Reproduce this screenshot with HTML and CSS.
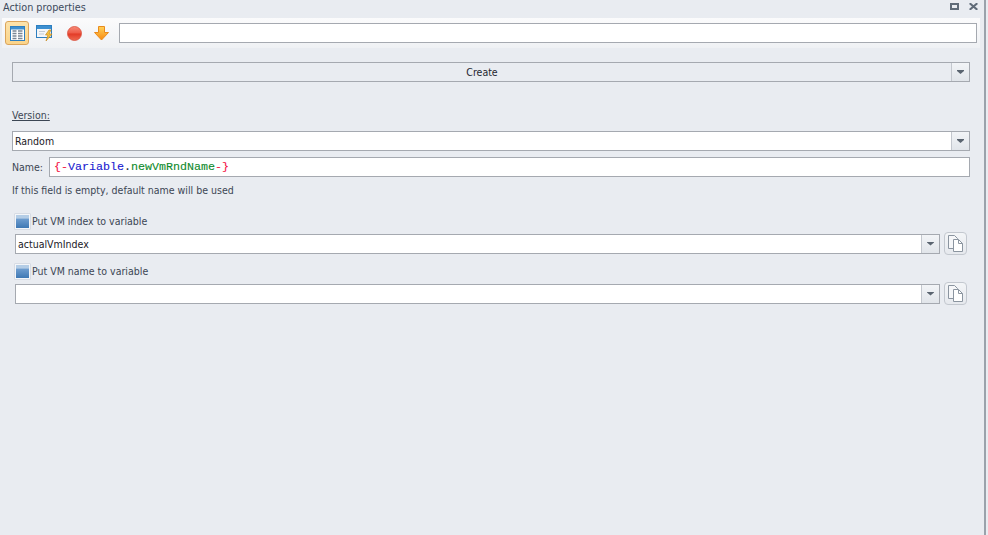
FILE: index.html
```html
<!DOCTYPE html>
<html lang="en">
<head>
<meta charset="utf-8">
<title>Action properties</title>
<link rel="stylesheet" href="styles.css">
</head>
<body>
<div class="panel">
  <header class="titlebar">
    <span class="title">Action properties</span>
    <span class="winbtns">
      <svg class="winicon" width="9" height="7" viewBox="0 0 9 7"><path d="M1 1h7v5H1z" fill="none" stroke="#5f6b78" stroke-width="2"/></svg>
      <svg class="winicon" width="9" height="7" viewBox="0 0 9 7"><path d="M.7 .2l7.600 6.600M8.300 .2L.7 6.800" fill="none" stroke="#5f6b78" stroke-width="2"/></svg>
    </span>
  </header>
  <div class="toolbar">
    <button class="tool selected" aria-label="Table">
      <svg width="15" height="15" viewBox="0 0 15 15"><rect x=".5" y=".5" width="14" height="14" fill="#fff" stroke="#2d7fc0"/><rect x="1" y="1" width="13" height="2.500" fill="#3d8fd0"/><path d="M2.500 5h4M2.500 7.500h4M2.500 10h4M2.500 12.500h4M8 5h4.500M8 7.500h4.500M8 10h4.500M8 12.500h4.500" stroke="#7b8794" stroke-width="1.300"/></svg>
    </button>
    <button class="tool" aria-label="Window event">
      <svg width="17" height="17" viewBox="0 0 17 17"><rect x=".5" y=".5" width="15" height="12" fill="#f4f6f8" stroke="#2d7fc0"/><rect x="1" y="1" width="14" height="3" fill="#3d8fd0"/><path d="M3 6.500h6M3 9h5" stroke="#c3cad2"/><path d="M13 5l-3.500 5h2.500l-2 6 6-7h-3l2-4z" fill="#f7c33f" stroke="#c78a22" stroke-width=".7"/></svg>
    </button>
    <button class="tool gap" aria-label="Stop">
      <svg width="15" height="15" viewBox="0 0 15 15"><defs><linearGradient id="stop" x1="0" y1="0" x2="0" y2="1"><stop offset="0" stop-color="#f78a78"/><stop offset=".48" stop-color="#ee5a46"/><stop offset=".52" stop-color="#e23a26"/><stop offset="1" stop-color="#ef6a50"/></linearGradient></defs><circle cx="7.500" cy="7.500" r="7" fill="url(#stop)" stroke="#d8503e" stroke-width=".8"/></svg>
    </button>
    <button class="tool" aria-label="Down">
      <svg width="15" height="15" viewBox="0 0 15 15"><defs><linearGradient id="down" x1="0" y1="0" x2="0" y2="1"><stop offset="0" stop-color="#ffd25a"/><stop offset="1" stop-color="#f98a10"/></linearGradient></defs><path d="M4.500 .5h6v6h4L7.500 14 .5 6.500h4z" fill="url(#down)" stroke="#e98a1c"/></svg>
    </button>
    <input class="field toolbar-input" type="text" aria-label="Search">
  </div>

  <main class="content">
    <div class="split">
      <button class="split-main">Create</button>
      <span class="arrow"></span>
    </div>

    <div class="version-label"><u>Version:</u></div>
    <div class="combo">
      <span class="combo-text">Random</span>
      <span class="arrow"></span>
    </div>

    <div class="name-row">
      <label class="name-label">Name:</label>
      <div class="field name-field"><span class="c-red">{-</span><span class="c-blue">Variable</span><span class="c-dark">.</span><span class="c-green">newVmRndName</span><span class="c-red">-}</span></div>
    </div>
    <p class="hint">If this field is empty, default name will be used</p>

    <section class="var-group first">
      <div class="check-row">
        <span class="checkbox"></span>
        <span class="check-label">Put VM index to variable</span>
      </div>
      <div class="var-row">
        <div class="combo grow">
          <span class="combo-text var-text">actualVmIndex</span>
          <span class="arrow"></span>
        </div>
        <button class="copy" aria-label="Copy">
          <svg width="15" height="17" viewBox="0 0 15 17"><path d="M.5 .5h6l3 3v10h-9z" fill="#f6f7f9" stroke="#8b95a0"/><path d="M5.500 4.500h5l4 4v8h-9z" fill="#fff" stroke="#8b95a0"/><path d="M10.500 4.500v4h4" fill="none" stroke="#8b95a0"/></svg>
        </button>
      </div>
    </section>

    <section class="var-group">
      <div class="check-row">
        <span class="checkbox"></span>
        <span class="check-label">Put VM name to variable</span>
      </div>
      <div class="var-row">
        <div class="combo grow">
          <span class="combo-text var-text"></span>
          <span class="arrow"></span>
        </div>
        <button class="copy" aria-label="Copy">
          <svg width="15" height="17" viewBox="0 0 15 17"><path d="M.5 .5h6l3 3v10h-9z" fill="#f6f7f9" stroke="#8b95a0"/><path d="M5.500 4.500h5l4 4v8h-9z" fill="#fff" stroke="#8b95a0"/><path d="M10.500 4.500v4h4" fill="none" stroke="#8b95a0"/></svg>
        </button>
      </div>
    </section>
  </main>
</div>
</body>
</html>
```

FILE: styles.css
```css
* { box-sizing: border-box; }
html, body { margin: 0; height: 100%; overflow: hidden; }
body {
  background: #e9ecf1;
  color: #3c4654;
  font: 10.500px/14px "DejaVu Sans", Verdana, sans-serif;
  font-stretch: condensed;
}
button { font: inherit; font-stretch: condensed; color: inherit; padding: 0; }

.panel {
  width: 986px;
  height: 535px;
  border-right: 2px solid #9aa2ab;
}

.titlebar {
  height: 18px;
  display: flex;
  align-items: flex-start;
  justify-content: space-between;
  padding: 0 6px 0 3px;
}
.title { color: #3d4a5c; font-size: 10.750px; padding-top: 1px; }
.winbtns { display: flex; gap: 10px; padding-top: 3px; }
.winicon { display: block; }

.toolbar {
  height: 30px;
  margin: 0 4px 0 2px;
  padding: 3px;
  background: linear-gradient(#fbfbfc, #eff1f4);
  display: flex;
  align-items: center;
}
.tool {
  width: 24px;
  height: 24px;
  flex: none;
  border: 0;
  background: none;
  display: flex;
  align-items: center;
  justify-content: center;
}
.tool + .tool { margin-left: 3px; }
.tool.gap { margin-left: 6px; }
.tool.selected {
  background: linear-gradient(#fce3ab, #fbd48a);
  border: 1px solid #dba45a;
  border-radius: 3px;
}
.toolbar-input { margin-left: 6px; flex: 1; min-width: 0; height: 20px; }

.field {
  background: #fff;
  border: 1px solid #a5a9b0;
  outline: 0;
}

.content { padding: 14px 14px 0 12px; }

.split {
  height: 20px;
  display: flex;
  border: 1px solid #a5a9b0;
  background: #e9ecf1;
}
.split-main {
  flex: 1;
  border: 0;
  background: none;
  color: #1f2730;
  text-align: center;
}

.arrow {
  width: 18px;
  flex: none;
  align-self: stretch;
  position: relative;
  border-left: 1px solid #c3c7ce;
  background: linear-gradient(#f2f4f7, #e1e5ea);
}
.arrow::after {
  content: "";
  position: absolute;
  left: 5px;
  top: 7px;
  width: 7px;
  height: 4px;
  background: #5a6470;
  clip-path: polygon(0 0, 100% 0, 100% 25%, 50% 100%, 0 25%);
}

.version-label { margin-top: 26px; height: 14px; }

.combo {
  height: 20px;
  margin-top: 9px;
  display: flex;
  align-items: center;
  background: #fff;
  border: 1px solid #a5a9b0;
}
.combo-text { flex: 1; padding-left: 2px; color: #1b2026; }
.var-text { padding-top: 1px; }

.name-row { display: flex; align-items: center; margin-top: 6px; height: 20px; }
.name-label { width: 37px; }
.name-field {
  flex: 1;
  height: 20px;
  padding-left: 4px;
  font: 11.670px/18px "Liberation Mono", "Courier New", monospace;
  font-stretch: normal;
  -webkit-text-stroke: .1px;
}
.c-red { color: #f5103f; }
.c-blue { color: #2020d0; }
.c-dark { color: #1a2a3a; }
.c-green { color: #0e8a2c; }

.hint { margin: 6px 0 0; height: 14px; }

.var-group { padding: 0 3px; margin-top: 8px; }
.var-group.first { margin-top: 16px; }
.check-row { display: flex; align-items: center; gap: 2px; height: 16px; }
.checkbox {
  width: 15px;
  height: 15px;
  flex: none;
  border: 1px solid #f4f6f9;
  background: linear-gradient(#b4cde6 0, #b4cde6 25%, #6e9dcf 30%, #3e78b4 100%);
  box-shadow: 0 0 0 .5px #c4ccd6;
}
.var-row { display: flex; align-items: center; gap: 4px; margin-top: 3px; height: 23px; }
.grow { flex: 1; margin-top: 0; }
.copy {
  width: 23px;
  height: 23px;
  flex: none;
  border: 1px solid #c3c8cf;
  border-radius: 4px;
  background: linear-gradient(#f3f5f7, #e6e9ee);
  display: flex;
  align-items: center;
  justify-content: center;
}
```
